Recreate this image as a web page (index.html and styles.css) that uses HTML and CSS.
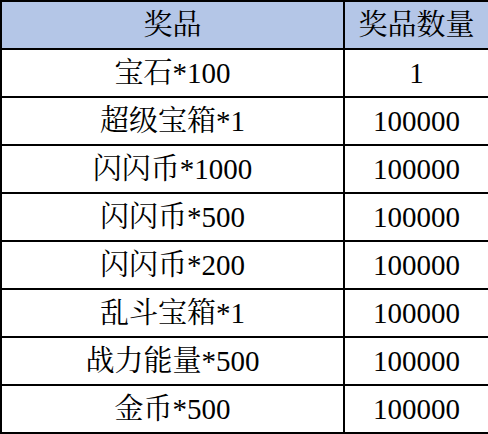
FILE: index.html
```html
<!DOCTYPE html>
<html>
<head>
<meta charset="utf-8">
<title>奖品</title>
<link rel="stylesheet" href="styles.css">
</head>
<body>
<table class="prize-table">
  <thead>
    <tr><th class="col-name">奖品</th><th class="col-qty">奖品数量</th></tr>
  </thead>
  <tbody>
    <tr><td>宝石*100</td><td>1</td></tr>
    <tr><td>超级宝箱*1</td><td>100000</td></tr>
    <tr><td>闪闪币*1000</td><td>100000</td></tr>
    <tr><td>闪闪币*500</td><td>100000</td></tr>
    <tr><td>闪闪币*200</td><td>100000</td></tr>
    <tr><td>乱斗宝箱*1</td><td>100000</td></tr>
    <tr><td>战力能量*500</td><td>100000</td></tr>
    <tr><td>金币*500</td><td>100000</td></tr>
  </tbody>
</table>
</body>
</html>
```

FILE: styles.css
```css
html, body {
  margin: 0;
  padding: 0;
  background: #ffffff;
}

.prize-table {
  border-collapse: collapse;
  width: 488px;
  table-layout: fixed;
  font-family: "Liberation Serif", "Noto Serif CJK SC", "Noto Sans CJK SC", serif;
  font-size: 29px;
  color: #000000;
}

.prize-table th,
.prize-table td {
  border: 2px solid #000000;
  padding: 0;
  height: 46px;
  line-height: 46px;
  text-align: center;
  font-weight: normal;
  white-space: nowrap;
}

.prize-table thead th {
  background: #b4c6e7;
}

.col-name {
  width: 341px;
}

.col-qty {
  width: 143px;
}
```
